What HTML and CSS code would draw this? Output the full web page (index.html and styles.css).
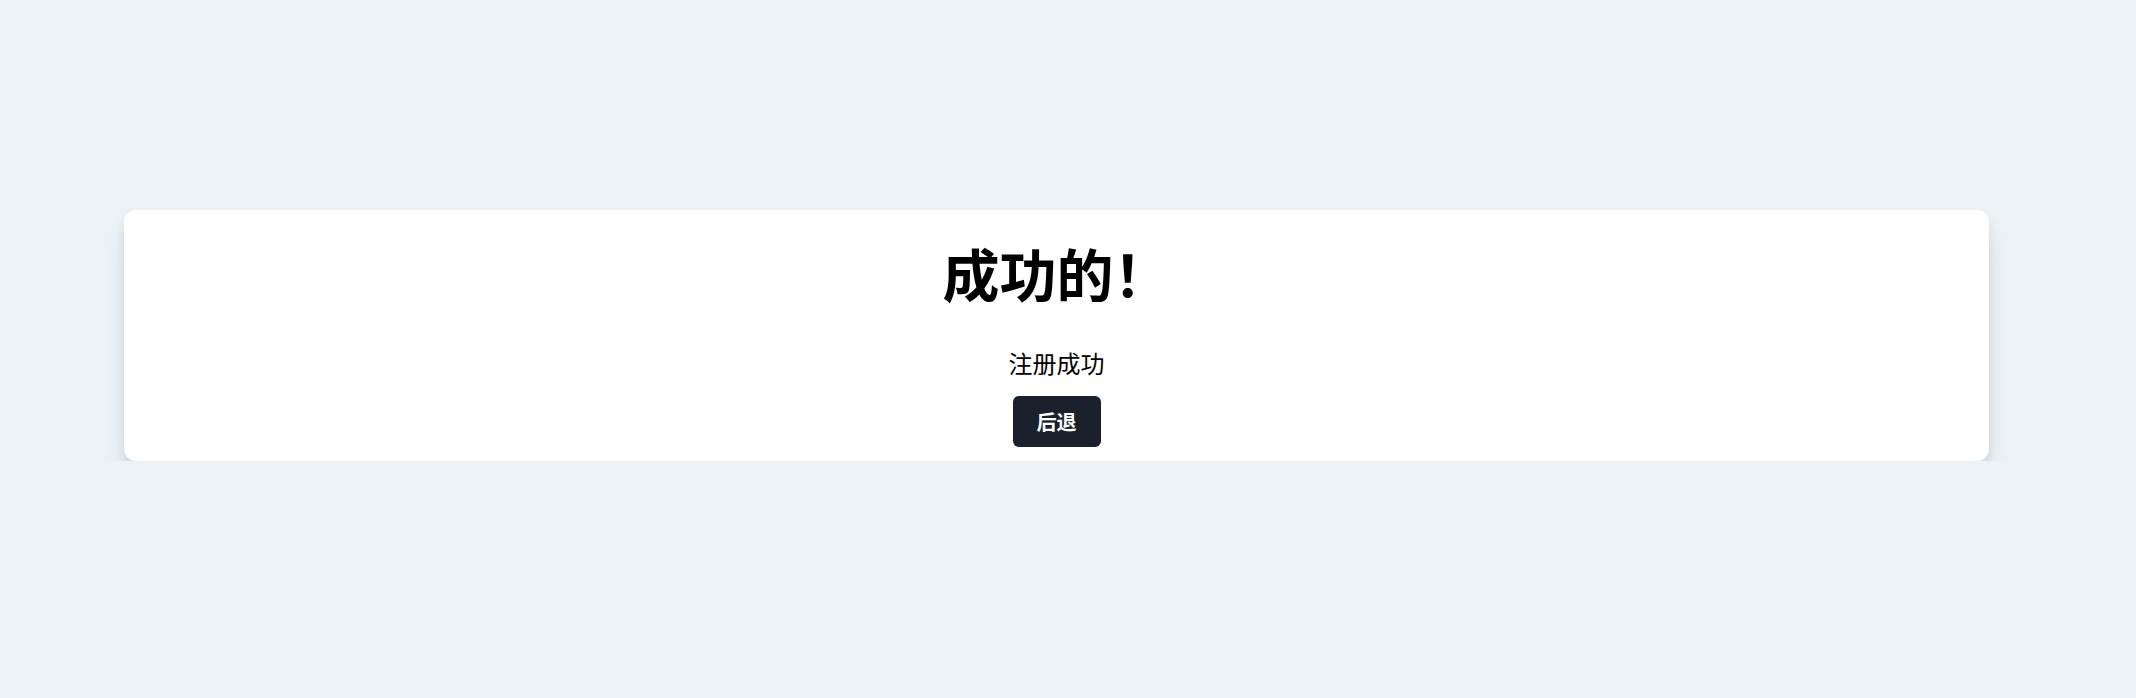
FILE: index.html
```html
<!DOCTYPE html>
<html lang="zh">
<head>
    <meta charset="UTF-8">
    <meta name="viewport" content="width=device-width, initial-scale=1.0">
    <title>成功的！</title>
    <link rel="stylesheet" href="styles.css">
</head>
<body>
    <div class="card">
        <h1>成功的！</h1>
        <p class="message">注册成功</p>
        <button class="back-btn" onclick="history.back()">后退</button>
    </div>
</body>
</html>
```

FILE: styles.css
```css
body {
    margin: 0;
    padding-top: 210px;
    font-family: "Noto Sans CJK SC", "Noto Sans", sans-serif;
    background-color: #edf2f7;
    color: #000;
}
.card {
    margin-left: 124px;
    width: 1865px;
    box-sizing: border-box;
    padding: 12px 0 14px;
    display: flex;
    flex-direction: column;
    align-items: center;
    background-color: #fff;
    border-radius: 12px;
    box-shadow: 0 6px 10px rgba(0, 0, 0, 0.08), 0 16px 30px -4px rgba(0, 0, 0, 0.1);
}
h1 {
    margin: 0;
    font-size: 57px;
    line-height: 100px;
    font-weight: 700;
}
.message {
    margin: 21px 0 13px;
    font-size: 24px;
    line-height: 40px;
}
.back-btn {
    padding: 0 24px;
    height: 51px;
    border: none;
    border-radius: 6px;
    background-color: #1a202c;
    color: #fff;
    font-family: inherit;
    font-size: 20px;
    font-weight: 600;
    cursor: pointer;
}
```
